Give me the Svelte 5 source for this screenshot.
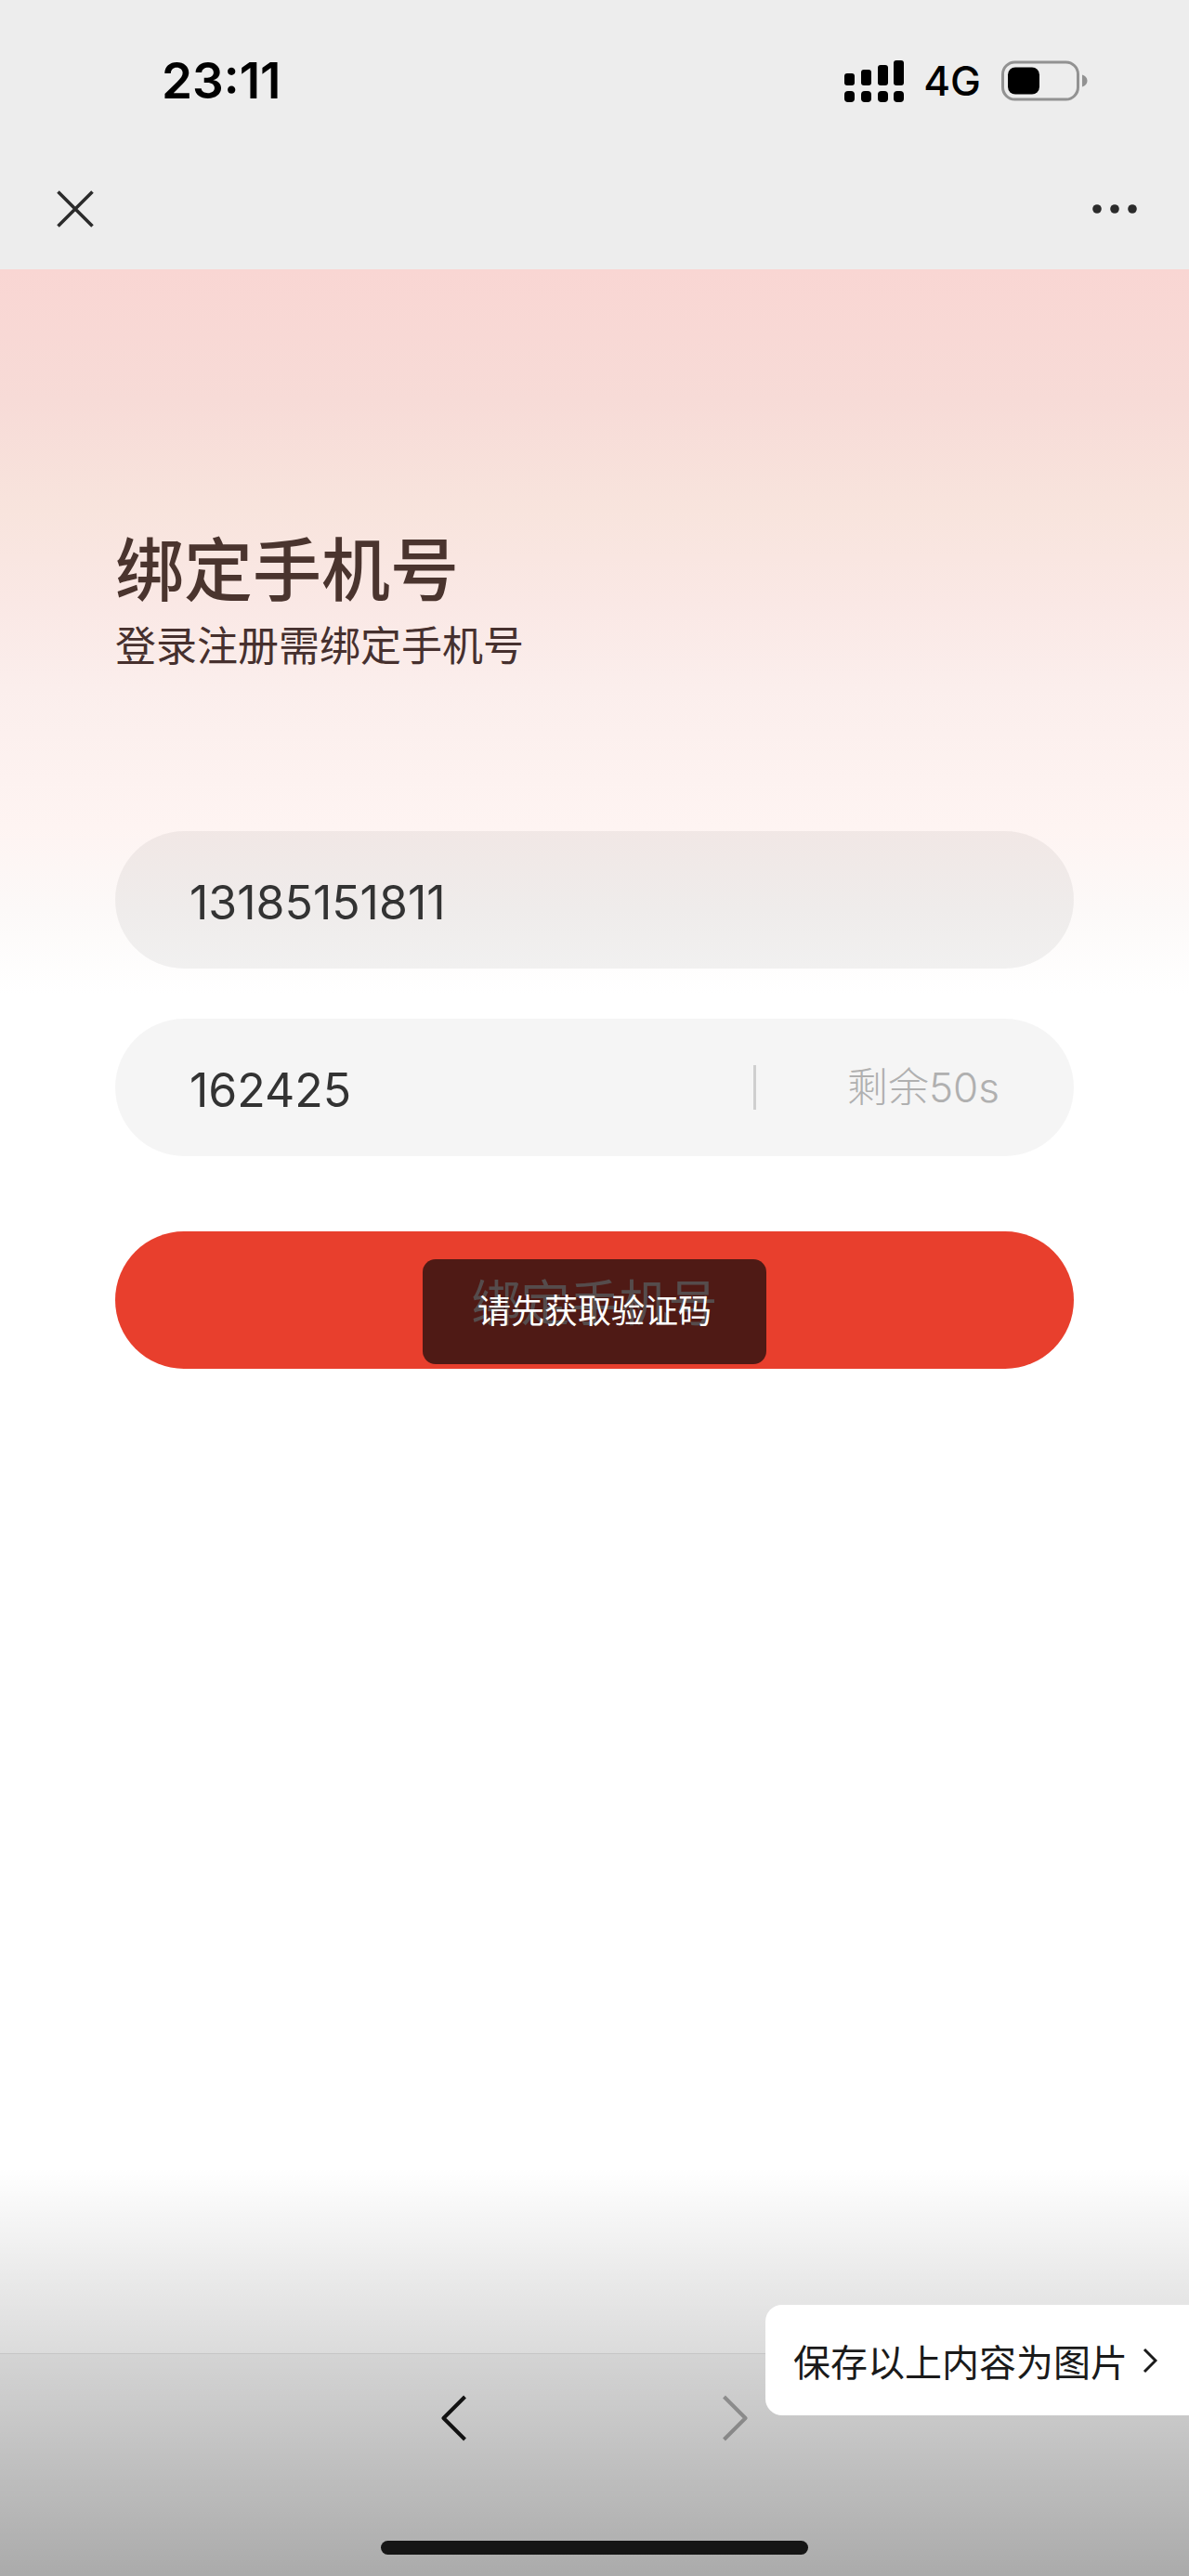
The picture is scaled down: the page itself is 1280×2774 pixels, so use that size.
<script>
  let phone = $state('13185151811');
  let code = $state('162425');
  let seconds = $state(50);
  let toast = $state('请先获取验证码');

  const bars = [
    { x: 0, top: 14 },
    { x: 18, top: 10 },
    { x: 36, top: 5 },
    { x: 53, top: 0 }
  ];
</script>

<div class="screen">
  <header>
    <div class="status">
      <span class="time">23:11</span>
      <div class="status-right">
        <svg class="signal" viewBox="0 0 65 45">
          {#each bars as bar}
            <rect x={bar.x} y={bar.top} width="11" height={27 - bar.top} rx="3" />
            <rect x={bar.x} y="33" width="11" height="12" rx="4" />
          {/each}
        </svg>
        <span class="network">4G</span>
        <svg class="battery" viewBox="0 0 94 44">
          <rect x="1.5" y="2" width="81" height="40" rx="13" fill="none" stroke="#929292" stroke-width="3" />
          <rect x="7" y="7.5" width="34" height="29" rx="8" fill="#000" />
          <path d="M87 15.500c3 .8 5.500 3.500 5.500 6.500s-2.500 5.700-5.500 6.500z" fill="#929292" />
        </svg>
      </div>
    </div>
    <div class="nav">
      <button class="icon-btn" aria-label="关闭">
        <svg width="40" height="40" viewBox="0 0 40 40">
          <path d="M1.500 1.500l37 37M38.500 1.500l-37 37" stroke="#2b2b2b" stroke-width="3.600" />
        </svg>
      </button>
      <button class="icon-btn" aria-label="更多">
        <svg width="48" height="10" viewBox="0 0 48 10" fill="#2b2b2b">
          <circle cx="5" cy="5" r="4.800" />
          <circle cx="24" cy="5" r="4.800" />
          <circle cx="43" cy="5" r="4.800" />
        </svg>
      </button>
    </div>
  </header>

  <main>
    <h1>绑定手机号</h1>
    <p class="sub">登录注册需绑定手机号</p>

    <form onsubmit={(e) => e.preventDefault()}>
      <div class="field phone">
        <input type="tel" aria-label="手机号" bind:value={phone} />
      </div>
      <div class="field">
        <input type="text" inputmode="numeric" aria-label="验证码" bind:value={code} />
        <button type="button" class="countdown" disabled>剩余{seconds}s</button>
      </div>
      <div class="submit-wrap">
        <button type="submit" class="submit">绑定手机号</button>
        {#if toast}
          <div class="toast" role="status">{toast}</div>
        {/if}
      </div>
    </form>
  </main>

  <footer>
    <div class="history">
      <button class="icon-btn" aria-label="后退">
        <svg width="28" height="50" viewBox="0 0 28 50">
          <path d="M25.500 2L2.500 25l23 23" fill="none" stroke="#161616" stroke-width="4" stroke-linejoin="round" />
        </svg>
      </button>
      <button class="icon-btn" aria-label="前进" disabled>
        <svg width="28" height="50" viewBox="0 0 28 50">
          <path d="M2.500 2l23 23-23 23" fill="none" stroke="#aaa" stroke-width="4" stroke-linejoin="round" />
        </svg>
      </button>
    </div>
    <div class="home"></div>
  </footer>

  <div class="shade"></div>
  <button class="save">
    保存以上内容为图片
    <svg width="16" height="28" viewBox="0 0 16 28">
      <path d="M2 2l12 12L2 26" fill="none" stroke="#1a1a1a" stroke-width="3" />
    </svg>
  </button>
</div>

<style>
  :global(body) {
    margin: 0;
  }
  .screen {
    position: relative;
    display: flex;
    flex-direction: column;
    min-height: 100vh;
    background: #fff;
    font-family: Inter, "Noto Sans CJK SC", sans-serif;
  }
  button {
    border: none;
    padding: 0;
    background: none;
    font-family: inherit;
    cursor: pointer;
  }
  svg {
    display: block;
  }
  header {
    background: #ededed;
    height: 290px;
  }
  .status {
    display: flex;
    justify-content: space-between;
    align-items: center;
    height: 174px;
    padding: 0 108px 0 174px;
  }
  .time {
    font-size: 53px;
    font-weight: 600;
    color: #000;
  }
  .status-right {
    display: flex;
    align-items: center;
  }
  .signal {
    width: 65px;
    height: 45px;
  }
  .network {
    margin: 0 22px 0 20px;
    font-size: 44px;
    font-weight: 500;
    color: #000;
  }
  .battery {
    width: 94px;
    height: 44px;
  }
  .nav {
    display: flex;
    justify-content: space-between;
    align-items: center;
    height: 102px;
    padding: 0 56px 0 61px;
  }
  main {
    flex: 1;
    padding: 274px 124px 0;
    background: linear-gradient(#f9d6d3 0, #f7dbd7 140px, #f8e4dd 260px, #fae8e5 360px, #fbeeec 450px, #fef4f2 600px, #fcf9f8 690px, #fff 780px);
  }
  h1 {
    margin: 0;
    font-size: 74px;
    line-height: 100px;
    font-weight: 500;
    color: #4a342e;
  }
  .sub {
    margin: 0;
    font-size: 44px;
    line-height: 64px;
    color: #46302e;
  }
  form {
    display: flex;
    flex-direction: column;
    gap: 54px;
    margin-top: 167px;
  }
  .field {
    display: flex;
    align-items: center;
    height: 148px;
    padding: 0 80px;
    border-radius: 74px;
    background: rgba(0, 0, 0, 0.04);
  }
  .phone {
    background: rgba(0, 0, 0, 0.05);
  }
  input {
    flex: 1;
    min-width: 0;
    border: none;
    outline: none;
    padding: 6px 0 0;
    background: none;
    font-family: inherit;
    font-size: 50px;
    color: #333;
  }
  .countdown {
    padding-left: 98px;
    border-left: 3px solid #cfcfcf;
    font-size: 44px;
    line-height: 48px;
    font-weight: 300;
    color: #b0b0b0;
  }
  .submit-wrap {
    position: relative;
    margin-top: 27px;
  }
  .submit {
    width: 100%;
    height: 148px;
    border-radius: 74px;
    background: #e83f2d;
    font-size: 53px;
    color: #fff;
  }
  /* toast floats over the submit button */
  .toast {
    position: absolute;
    top: 30px;
    left: 50%;
    transform: translateX(-50%);
    padding: 0 59px;
    border-radius: 14px;
    background: rgba(25, 14, 14, 0.74);
    font-size: 36px;
    line-height: 113px;
    white-space: nowrap;
    color: #fff;
  }
  footer {
    display: flex;
    flex-direction: column;
    align-items: center;
    height: 239px;
    border-top: 1px solid #e6e6e6;
    background: #f7f7f7;
  }
  .history {
    display: flex;
    gap: 274px;
    padding: 44px 0 107px;
  }
  .home {
    width: 36%;
    height: 15px;
    border-radius: 8px;
    background: #161616;
    position: relative;
    z-index: 1;
  }
  .shade {
    position: absolute;
    left: 0;
    right: 0;
    bottom: 0;
    height: 440px;
    background: linear-gradient(transparent, rgba(0, 0, 0, 0.31));
    pointer-events: none;
  }
  .save {
    position: absolute;
    right: 0;
    bottom: 173px;
    display: flex;
    align-items: center;
    gap: 16px;
    height: 119px;
    padding: 0 34px 0 30px;
    border-radius: 18px 0 0 18px;
    background: #fff;
    font-size: 40px;
    color: #1a1a1a;
  }
</style>
